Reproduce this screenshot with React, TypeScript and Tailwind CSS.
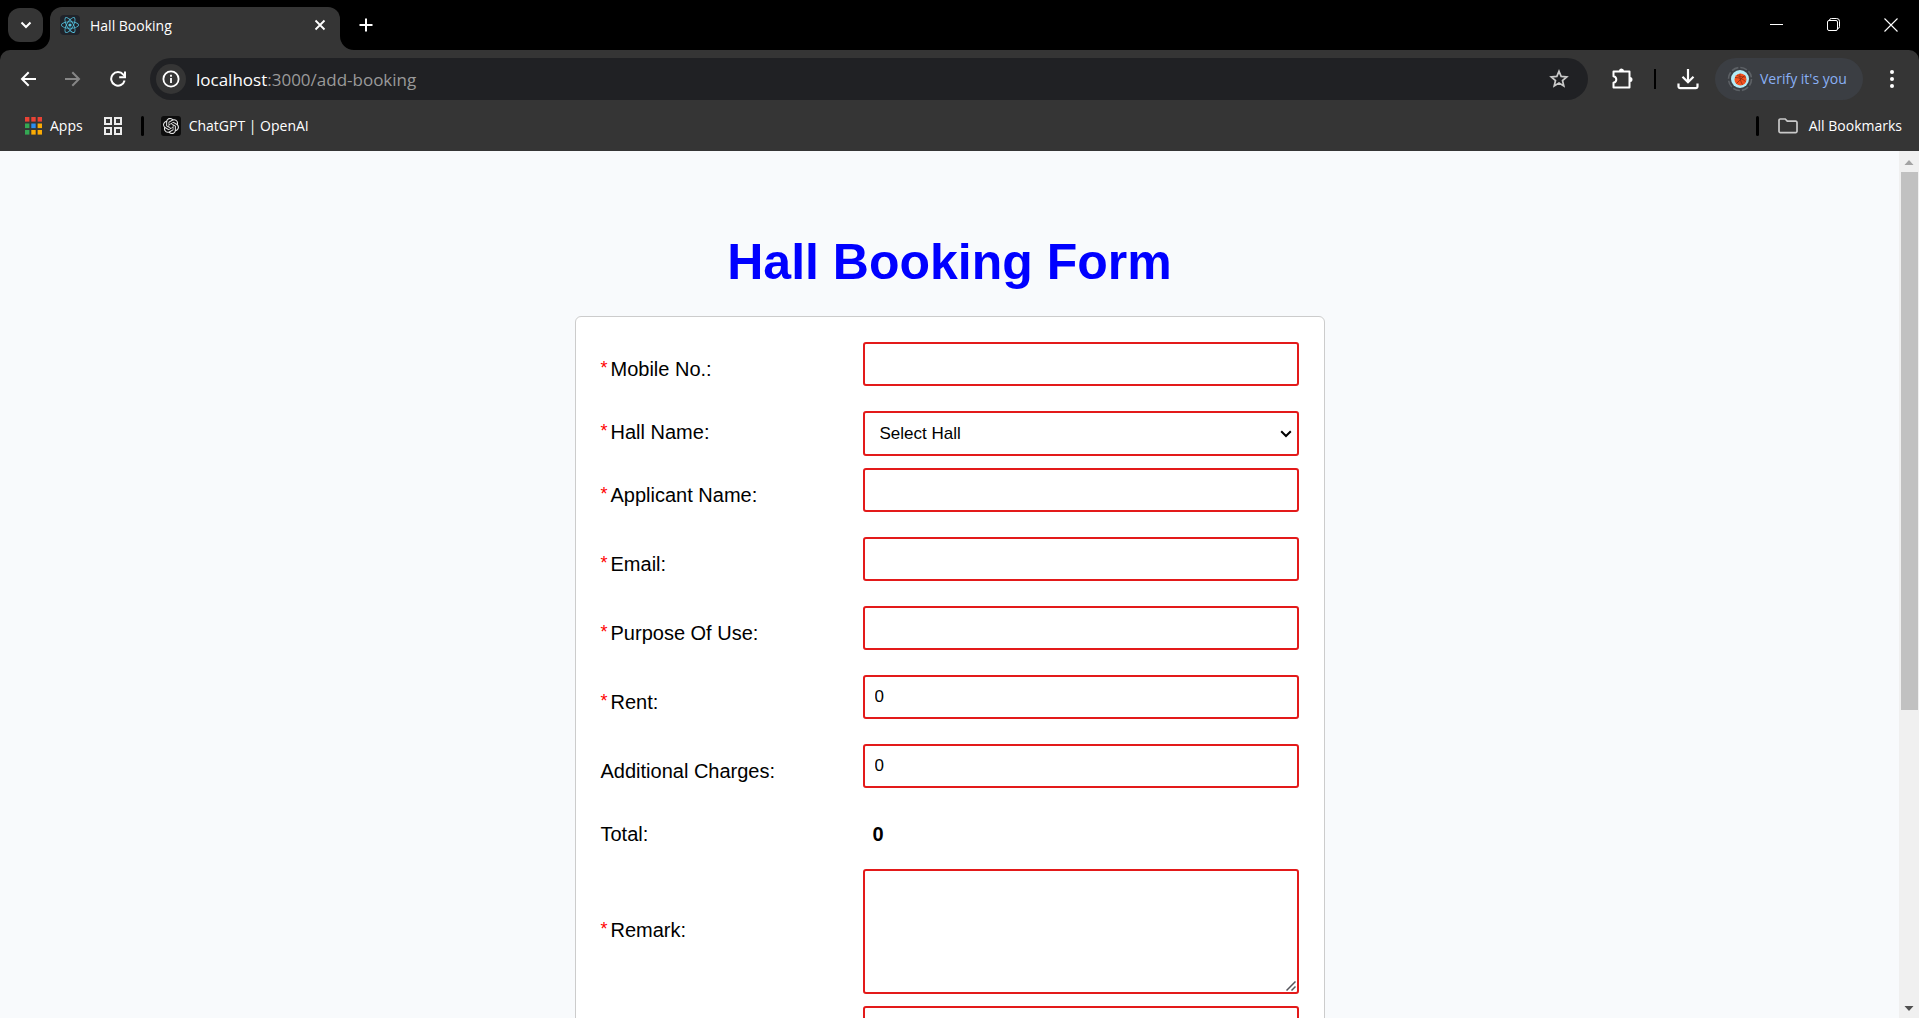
import type { ReactNode } from "react";
import { FaReact } from "react-icons/fa";
import { SiOpenai } from "react-icons/si";

const fieldBox =
  "block w-full rounded-[3px] border-2 border-[#e31a1a] bg-white text-[17px] text-black outline-none";

function TabStrip() {
  return (
    <header className="flex h-[50px] shrink-0 bg-black text-white">
      <button
        type="button"
        aria-label="Search tabs"
        className="ml-2 mt-2 flex h-[34px] w-[35px] items-center justify-center rounded-xl bg-[#353535]"
      >
        <svg viewBox="0 0 12 8" className="h-2 w-3" fill="none" stroke="currentColor" strokeWidth="2">
          <path d="M1.5 1.5 6 6l4.5-4.5" />
        </svg>
      </button>
      <div className="relative ml-[7px] mt-[7px] flex w-[290px] items-start rounded-t-xl bg-[#353535] pl-2.5 pr-3.5 pt-2">
        <svg viewBox="0 0 14 14" className="absolute bottom-0 right-full size-3.5" fill="#353535">
          <path d="M14 0v14H0A14 14 0 0 0 14 0Z" />
        </svg>
        <svg viewBox="0 0 14 14" className="absolute bottom-0 left-full size-3.5" fill="#353535">
          <path d="M0 0v14h14A14 14 0 0 1 0 0Z" />
        </svg>
        <span className="flex size-5 items-center justify-center rounded-sm bg-[#20232a]">
          <FaReact className="size-[18px] text-[#53c1de]" />
        </span>
        <span className="ml-2.5 flex-1 text-sm leading-[22px]">Hall Booking</span>
        <button type="button" aria-label="Close tab" className="flex h-5 items-center">
          <svg viewBox="0 0 12 12" className="size-3" fill="none" stroke="currentColor" strokeWidth="1.8">
            <path d="m1.500 1.500 9 9m0-9-9 9" />
          </svg>
        </button>
      </div>
      <button type="button" aria-label="New tab" className="ml-[19px] flex h-[50px] items-center">
        <svg viewBox="0 0 14 14" className="size-3.5" fill="none" stroke="currentColor" strokeWidth="2">
          <path d="M7 .5v13M.5 7h13" />
        </svg>
      </button>
      <div className="ml-auto flex h-[49px] items-center gap-[44px] pr-[21px]">
        <button type="button" aria-label="Minimize">
          <svg viewBox="0 0 13 13" className="size-[13px]" stroke="currentColor">
            <path d="M0 6.500h13" />
          </svg>
        </button>
        <button type="button" aria-label="Restore">
          <svg viewBox="0 0 13 13" className="size-[13px]" fill="none" stroke="currentColor">
            <rect x=".5" y="2.500" width="10" height="10" rx="1.500" />
            <path d="M2.500 2.300A1.800 1.800 0 0 1 4.300.5h5.400a2.800 2.800 0 0 1 2.800 2.800v5.400a1.800 1.800 0 0 1-1.800 1.800" />
          </svg>
        </button>
        <button type="button" aria-label="Close window">
          <svg viewBox="0 0 14 14" className="size-3.5" stroke="currentColor" strokeWidth="1.1">
            <path d="m.5.5 13 13m0-13-13 13" />
          </svg>
        </button>
      </div>
    </header>
  );
}

function ProfileAvatar() {
  return (
    <svg viewBox="0 0 26 26" className="size-[26px]" fill="none">
      <circle cx="13" cy="13" r="11.500" stroke="#5d6166" strokeWidth="1.600" strokeDasharray="7 2.030" />
      <circle cx="13" cy="13" r="9" fill="#b3ecf7" />
      <circle cx="13.500" cy="13.500" r="6" fill="#f4511e" />
      <path
        d="m9.500 17.500 8-8M13 7.800c-.5 4 .5 7.500 2.500 11M8 11.500c3.500 0 7.500 1 10.500 4M10 9c1.500 1.500 4.500 2 9 2"
        stroke="#8c2f12"
        strokeWidth=".8"
      />
    </svg>
  );
}

function Toolbar() {
  return (
    <div className="flex h-[58px] items-center pl-5 pr-[18px] text-white">
      <button type="button" aria-label="Back">
        <svg viewBox="0 0 16 16" className="size-4" fill="none" stroke="currentColor" strokeWidth="2">
          <path d="M16 8H2m6.700-6.700L2 8l6.700 6.700" />
        </svg>
      </button>
      <button type="button" aria-label="Forward" className="ml-[29px] text-[#868686]">
        <svg viewBox="0 0 16 16" className="size-4" fill="none" stroke="currentColor" strokeWidth="2">
          <path d="M0 8h14M7.300 1.300 14 8l-6.700 6.700" />
        </svg>
      </button>
      <button type="button" aria-label="Reload" className="ml-[29px]">
        <svg viewBox="0 0 16 16" className="size-4" fill="none" stroke="currentColor" strokeWidth="2">
          <path d="M14.600 9.500A6.800 6.800 0 1 1 13.300 3.600L15 5.300" />
          <path d="M15 .5v5.800H9.200" />
        </svg>
      </button>
      <div className="ml-6 flex h-[42px] min-w-0 flex-1 items-center rounded-full bg-[#202124] pl-1.5 pr-[19px]">
        <button
          type="button"
          aria-label="View site information"
          className="flex size-[30px] items-center justify-center rounded-full bg-[#353535]"
        >
          <svg viewBox="0 0 18 18" className="size-[18px]" fill="none" stroke="currentColor" strokeWidth="1.800">
            <circle cx="9" cy="9" r="7.600" />
            <path d="M9 8v5M9 4.800v1.900" />
          </svg>
        </button>
        <a href="http://localhost:3000/add-booking" className="ml-2.5 pt-0.5 text-[17px] leading-6 text-[#9a9a9a]">
          <span className="text-white">localhost</span>:3000/add-booking
        </a>
        <button type="button" aria-label="Bookmark this tab" className="ml-auto text-[#c9c9c9]">
          <svg viewBox="0 0 20 20" className="size-5" fill="none" stroke="currentColor" strokeWidth="1.700">
            <path d="m10 2.300 2.150 5.150 5.600.45-4.250 3.650 1.300 5.450L10 14.100 5.200 17l1.300-5.450L2.250 7.900l5.600-.45Z" />
          </svg>
        </button>
      </div>
      <button type="button" aria-label="Extensions" className="ml-[22px]">
        <svg viewBox="0 0 24 24" className="size-6" fill="none" stroke="currentColor" strokeWidth="2">
          <path
            d="M3.500 4.500H19.500v16h-16v-4.700c1.800-.4 2.800-1.600 2.800-3.300s-1-2.900-2.800-3.300Z"
            strokeLinejoin="round"
          />
          <path d="M9 4a2.500 2.500 0 0 1 5 0ZM20 10a2.500 2.500 0 0 1 0 5Z" fill="currentColor" stroke="none" />
        </svg>
      </button>
      <span className="ml-5 h-5 w-0.5 bg-black" />
      <button type="button" aria-label="Downloads" className="ml-[21px]">
        <svg viewBox="0 0 22 22" className="size-[22px]" fill="none" stroke="currentColor" strokeWidth="2.200">
          <path d="M11 1v13M5.500 8.800 11 14.300l5.500-5.500" />
          <path d="M1.500 15.500v3a1.700 1.700 0 0 0 1.700 1.700h15.600a1.700 1.700 0 0 0 1.700-1.700v-3" />
        </svg>
      </button>
      <button
        type="button"
        className="ml-4 flex h-[42px] w-[148px] items-center rounded-full bg-[#3b3e43] pl-3 text-sm text-[#8ab0f5]"
      >
        <ProfileAvatar />
        <span className="ml-[7px] whitespace-nowrap">Verify it's you</span>
      </button>
      <button type="button" aria-label="Menu" className="ml-[22px] mr-0.5">
        <svg viewBox="0 0 14 20" className="h-5 w-3.5" fill="currentColor">
          <circle cx="7" cy="3" r="2" />
          <circle cx="7" cy="10" r="2" />
          <circle cx="7" cy="17" r="2" />
        </svg>
      </button>
    </div>
  );
}

const appColors = [
  "#ea4335", "#ea4335", "#ea4335",
  "#34a853", "#2b8cf0", "#fbab04",
  "#34a853", "#fbab04", "#fbab04",
];

function BookmarksBar() {
  return (
    <nav className="flex h-[43px] items-center pb-[7px] pl-[25px] pr-[17px] text-sm text-white">
      <a href="#apps" className="flex items-center gap-2">
        <svg viewBox="0 0 17 18" className="h-[18px] w-[17px]">
          {appColors.map((color, i) => (
            <rect key={i} x={(i % 3) * 6.3} y={Math.floor(i / 3) * 6.5} width="4.400" height="4.600" fill={color} />
          ))}
        </svg>
        Apps
      </a>
      <button type="button" aria-label="Tab groups" className="ml-[21px]">
        <svg viewBox="0 0 18 18" className="size-[18px]" fill="none" stroke="#ececec" strokeWidth="2">
          <path d="M1 1h6v6H1ZM11 1h6v6h-6ZM1 11h6v6H1ZM11 11h6v6h-6Z" />
        </svg>
      </button>
      <span className="ml-[19px] h-5 w-[3px] rounded-full bg-black" />
      <a href="#chatgpt" className="ml-[17px] flex items-center gap-2">
        <span className="flex size-5 items-center justify-center rounded-[3px] bg-[#0d0d0d]">
          <SiOpenai className="size-4 text-[#e6e6e6]" />
        </span>
        ChatGPT | OpenAI
      </a>
      <span className="ml-auto h-5 w-[3px] rounded-full bg-black" />
      <a href="#bookmarks" className="ml-[19px] flex items-center gap-[11px]">
        <svg viewBox="0 0 20 16" className="h-4 w-5" fill="none" stroke="#c9c9c9" strokeWidth="1.700">
          <path d="M1 13.300V2.300A1.300 1.300 0 0 1 2.300 1h4.900l2.100 2.200h8.400A1.300 1.300 0 0 1 19 4.500v8.800a1.300 1.300 0 0 1-1.300 1.300H2.300A1.300 1.300 0 0 1 1 13.300Z" />
        </svg>
        All Bookmarks
      </a>
    </nav>
  );
}

type RowProps = { label: string; htmlFor?: string; required?: boolean; children: ReactNode };

function Row({ label, htmlFor, required, children }: RowProps) {
  return (
    <div className="grid grid-cols-[262px_minmax(0,1fr)] items-center">
      <label htmlFor={htmlFor} className="flex gap-[3px] pb-[3px]">
        {required && <span className="text-lg leading-[22px] text-[#ff0000]">*</span>}
        {label}
      </label>
      {children}
    </div>
  );
}

type FieldProps = { id: string; label: string; required?: boolean; type?: string; value?: string };

function Field({ id, label, required, type = "text", value = "" }: FieldProps) {
  return (
    <Row label={label} htmlFor={id} required={required}>
      <input id={id} type={type} defaultValue={value} className={`${fieldBox} mb-[13px] px-2.5 py-2.5 leading-5`} />
    </Row>
  );
}

function BookingPage() {
  return (
    <main className="min-w-0 flex-1 overflow-hidden bg-[#f8fafc] px-4 pt-[81px] font-['Liberation_Sans',Arial,sans-serif] text-black">
      <h1 className="mb-6 text-center text-[50px] font-bold leading-[60px] text-[#0000ff]">
        Hall Booking Form
      </h1>
      <form className="mx-auto flex max-w-[750px] flex-col gap-3 rounded-md border border-[#cccccc] bg-white p-[25px] text-xl leading-6">
        <Field id="mobile" label="Mobile No.:" required type="tel" />
        <Row label="Hall Name:" htmlFor="hall" required>
          <div className="relative">
            <select id="hall" className={`${fieldBox} h-[45px] appearance-none px-[15px]`}>
              <option>Select Hall</option>
            </select>
            <svg
              viewBox="0 0 12 8"
              className="pointer-events-none absolute right-[7px] top-[19px] h-2 w-3"
              fill="none"
              stroke="black"
              strokeWidth="2"
            >
              <path d="M1.200 1.200 6 6l4.800-4.800" />
            </svg>
          </div>
        </Row>
        <Field id="applicant" label="Applicant Name:" required />
        <Field id="email" label="Email:" required type="email" />
        <Field id="purpose" label="Purpose Of Use:" required />
        <Field id="rent" label="Rent:" required value="0" />
        <Field id="charges" label="Additional Charges:" value="0" />
        <Row label="Total:">
          <output className="block px-2.5 pb-[11px] pt-[9px] font-bold">0</output>
        </Row>
        <Row label="Remark:" htmlFor="remark" required>
          <div className="relative">
            <textarea
              id="remark"
              className={`${fieldBox} h-[125px] resize p-2.5 [&::-webkit-resizer]:bg-transparent`}
            />
            <svg
              viewBox="0 0 10 10"
              className="pointer-events-none absolute bottom-[3px] right-[3px] size-2.5"
              stroke="#55555c"
              strokeWidth="1.500"
            >
              <path d="M.5 9.500l9-9M5.500 9.500l4-4" />
            </svg>
          </div>
        </Row>
        <div className="grid grid-cols-[262px_minmax(0,1fr)]">
          <textarea aria-label="Address" className={`${fieldBox} col-start-2 h-[125px] p-2.5`} />
        </div>
      </form>
    </main>
  );
}

function Scrollbar() {
  return (
    <div className="flex w-5 shrink-0 flex-col items-center bg-[#f0f0f0]">
      <svg viewBox="0 0 20 21" className="h-[21px] w-5" fill="#a3a3a3">
        <path d="M5.500 14h9L10 9Z" />
      </svg>
      <div className="h-[62%] w-[17px] bg-[#c1c1c1]" />
      <svg viewBox="0 0 20 21" className="mt-auto h-[21px] w-5" fill="#505050">
        <path d="M5.500 9h9L10 14Z" />
      </svg>
    </div>
  );
}

export default function App() {
  return (
    <div className="flex h-screen flex-col overflow-hidden bg-black font-['Open_Sans','Noto_Sans',sans-serif]">
      <TabStrip />
      <div className="shrink-0 rounded-t-[10px] bg-[#353535]">
        <Toolbar />
        <BookmarksBar />
      </div>
      <div className="flex min-h-0 flex-1">
        <BookingPage />
        <Scrollbar />
      </div>
    </div>
  );
}
